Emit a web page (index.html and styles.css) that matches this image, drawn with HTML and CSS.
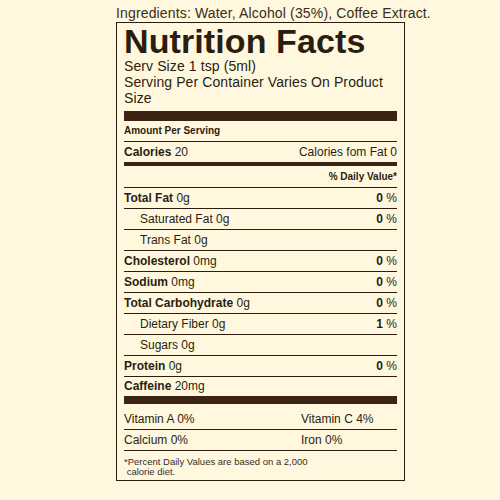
FILE: index.html
```html
<!DOCTYPE html>
<html lang="en">
<head>
    <meta charset="UTF-8">
    <meta name="viewport" content="width=device-width, initial-scale=1.0">
    <title>Nutrition Facts</title>
    <link rel="stylesheet" href="styles.css">
</head>
<body>
    <div class="wrapper">
        <p class="ingredients">Ingredients: Water, Alcohol (35%), Coffee Extract.</p>

        <div class="label">
            <h1 class="title">Nutrition Facts</h1>
            <p class="serving">Serv Size 1 tsp (5ml)</p>
            <p class="serving">Serving Per Container Varies On Product Size</p>

            <div class="bar-thick"></div>

            <div class="row small-head">Amount Per Serving</div>
            <div class="row calories">
                <span><b>Calories</b> 20</span>
                <span>Calories fom Fat 0</span>
            </div>
            <div class="row small-head right">% Daily Value*</div>

            <div class="row">
                <span><b>Total Fat</b> 0g</span>
                <span><b>0</b> %</span>
            </div>
            <div class="row sub">
                <span>Saturated Fat 0g</span>
                <span><b>0</b> %</span>
            </div>
            <div class="row sub">
                <span>Trans Fat 0g</span>
            </div>
            <div class="row">
                <span><b>Cholesterol</b> 0mg</span>
                <span><b>0</b> %</span>
            </div>
            <div class="row">
                <span><b>Sodium</b> 0mg</span>
                <span><b>0</b> %</span>
            </div>
            <div class="row">
                <span><b>Total Carbohydrate</b> 0g</span>
                <span><b>0</b> %</span>
            </div>
            <div class="row sub">
                <span>Dietary Fiber 0g</span>
                <span><b>1</b> %</span>
            </div>
            <div class="row sub">
                <span>Sugars 0g</span>
            </div>
            <div class="row">
                <span><b>Protein</b> 0g</span>
                <span><b>0</b> %</span>
            </div>
            <div class="row caffeine">
                <span><b>Caffeine</b> 20mg</span>
            </div>

            <div class="vitamins first">
                <span>Vitamin A 0%</span>
                <span>Vitamin C 4%</span>
            </div>
            <div class="vitamins">
                <span>Calcium 0%</span>
                <span>Iron 0%</span>
            </div>

            <p class="footnote">*Percent Daily Values are based on a 2,000<br>&nbsp;calorie diet.</p>
        </div>
    </div>
</body>
</html>
```

FILE: styles.css
```css
body {
    margin: 0;
    background-color: #fff8de;
    font-family: "Liberation Sans", Arial, sans-serif;
    color: #2b1d10;
}
.wrapper {
    margin-left: 116px;
    padding-top: 5px;
}
.ingredients {
    margin: 0;
    font-size: 14px;
    line-height: 16px;
    letter-spacing: 0.15px;
    color: #3a2c1c;
    white-space: nowrap;
}
.label {
    width: 273px;
    margin-top: 1px;
    padding: 0 7px 3px;
    border: 1px solid #2b1d10;
}
.title {
    margin: 1px 0 0;
    font-size: 34px;
    line-height: 34px;
    font-weight: bold;
    letter-spacing: 0.1px;
}
.serving {
    margin: 0;
    font-size: 14px;
    line-height: 16px;
    letter-spacing: 0.1px;
    width: 264px;
}
.bar-thick {
    height: 10px;
    margin-top: 5px;
    background-color: #3b2314;
}
.row {
    display: flex;
    justify-content: space-between;
    height: 20px;
    line-height: 20px;
    font-size: 12px;
    border-bottom: 1px solid #2b1d10;
}
.small-head {
    font-size: 10px;
    font-weight: bold;
}
.right {
    justify-content: flex-end;
    height: 21px;
    line-height: 22px;
}
.calories {
    border-bottom: 4px solid #3b2314;
}
.sub {
    padding-left: 16px;
}
.caffeine {
    height: 19px;
    line-height: 19px;
    border-bottom: 8px solid #3b2314;
}
.vitamins {
    display: grid;
    grid-template-columns: 177px 1fr;
    height: 20px;
    line-height: 20px;
    font-size: 12px;
    border-bottom: 1px solid #2b1d10;
}
.vitamins.first {
    padding-top: 5px;
}
.footnote {
    margin: 6px 0 0;
    font-size: 9.5px;
    line-height: 10px;
    color: #3a2c1c;
}
```
